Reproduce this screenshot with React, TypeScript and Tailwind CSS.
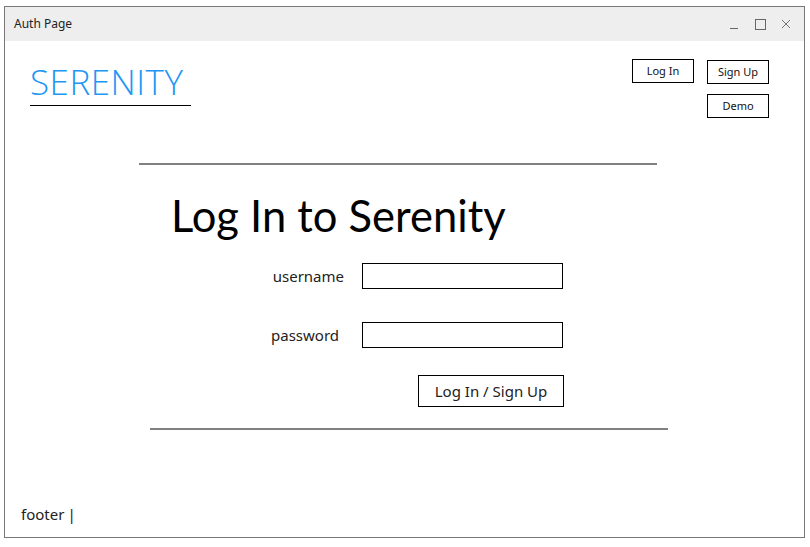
import React from "react";

export default function App() {
  const sans = { fontFamily: '"Noto Sans", "Open Sans", sans-serif' };
  return (
    <div className="w-[810px] h-[547px] bg-white pl-[4px] pt-[6px]" style={sans}>
      <div className="w-[801px] h-[532px] border border-[#777777] flex flex-col">
        {/* title bar */}
        <div className="h-[34px] bg-[#eeeeee] flex items-center pl-[9px] pr-[12px] shrink-0">
          <span className="text-[12px] text-[#222]">Auth Page</span>
          <div className="ml-auto flex items-center gap-[14px] text-[#666]">
            <svg width="12" height="12" viewBox="0 0 12 12"><line x1="2" y1="10.5" x2="10" y2="10.5" stroke="#666" strokeWidth="1" /></svg>
            <svg width="12" height="12" viewBox="0 0 12 12"><rect x="1.5" y="1.5" width="10" height="10" fill="none" stroke="#666" strokeWidth="1" /></svg>
            <svg width="12" height="12" viewBox="0 0 12 12"><path d="M2 2 L10 10 M10 2 L2 10" stroke="#777" strokeWidth="1" /></svg>
          </div>
        </div>
        {/* header */}
        <div className="flex pl-[25px] pr-[35px] pt-[18px]">
          <div className="flex flex-col">
            <span className="text-[35px] leading-[46px] text-[#2196f3] font-light tracking-[0.5px]" style={{ fontFamily: '"Open Sans", sans-serif' }}>SERENITY</span>
            <div className="w-[161px] h-[1px] bg-black" />
          </div>
          <div className="ml-auto flex gap-[13px]">
            <button className="w-[62px] h-[24px] border border-black text-[11px] text-[#111]">Log In</button>
            <div className="flex flex-col gap-[10px] pt-[1px]">
              <button className="w-[62px] h-[24px] border border-black text-[11px] text-[#111]">Sign Up</button>
              <button className="w-[62px] h-[24px] border border-black text-[11px] text-[#111]">Demo</button>
            </div>
          </div>
        </div>
        {/* main */}
        <div className="flex flex-col pl-[134px] mt-[45px]">
          <div className="w-[518px] h-[2px] bg-[#808080]" />
          <h1 className="text-[43.5px] leading-[56px] text-black pl-[32px] mt-[22px]" style={{ fontFamily: 'Lato, sans-serif' }}>Log In to Serenity</h1>
          <div className="flex items-center mt-[20px]">
            <span className="w-[223px] text-right pr-[18px] text-[15px] text-[#222]">username</span>
            <input className="w-[201px] h-[26px] border border-black outline-none" />
          </div>
          <div className="flex items-center mt-[33px]">
            <span className="w-[222px] text-right pr-[22px] text-[15px] text-[#222]">password</span>
            <input className="w-[201px] h-[26px] border border-black outline-none ml-[1px]" />
          </div>
          <div className="flex mt-[27px] pl-[279px]">
            <button className="w-[146px] h-[32px] border border-black text-[15px] text-[#222]">Log In / Sign Up</button>
          </div>
          <div className="w-[518px] h-[2px] bg-[#808080] mt-[21px] ml-[11px]" />
        </div>
        {/* footer */}
        <div className="mt-auto pl-[16px] pb-[12px] text-[15px] text-[#222]">footer<span className="ml-[3px]">|</span></div>
      </div>
    </div>
  );
}
